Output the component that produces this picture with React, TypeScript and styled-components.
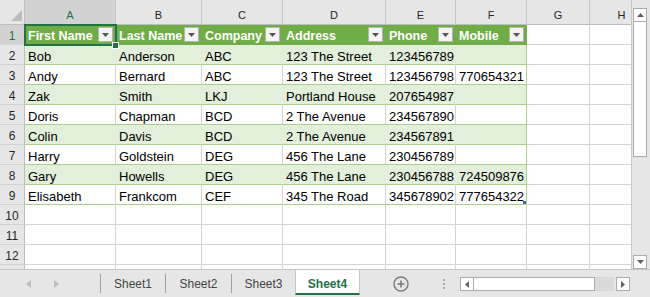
import React from 'react';
import styled, { createGlobalStyle, css } from 'styled-components';

const GlobalStyle = createGlobalStyle`
  html, body { margin: 0; padding: 0; background: #ffffff; }
  body { font-family: "Liberation Sans", Arial, sans-serif; }
  * { box-sizing: border-box; }
`;

const COLS = [91, 86, 81, 103, 70, 71, 63, 64];
const LETTERS = ['A', 'B', 'C', 'D', 'E', 'F', 'G', 'H'];
const TABLE_COLS = 6;

const HEAD = ['First Name', 'Last Name', 'Company', 'Address', 'Phone', 'Mobile'];
const DATA: string[][] = [
  ['Bob', 'Anderson', 'ABC', '123 The Street', '123456789', ''],
  ['Andy', 'Bernard', 'ABC', '123 The Street', '123456798', '770654321'],
  ['Zak', 'Smith', 'LKJ', 'Portland House', '207654987', ''],
  ['Doris', 'Chapman', 'BCD', '2 The Avenue', '234567890', ''],
  ['Colin', 'Davis', 'BCD', '2 The Avenue', '234567891', ''],
  ['Harry', 'Goldstein', 'DEG', '456 The Lane', '230456789', ''],
  ['Gary', 'Howells', 'DEG', '456 The Lane', '230456788', '724509876'],
  ['Elisabeth', 'Frankcom', 'CEF', '345 The Road', '345678902', '777654322'],
];
const NUMBERED_ROWS = 12;
const TOTAL_ROWS = 13;

const Window = styled.div`
  width: 650px;
  height: 297px;
  display: flex;
  flex-direction: column;
  overflow: hidden;
  background: #e6e6e6;
`;

const Main = styled.div`
  display: flex;
  height: 270px;
`;

const SheetArea = styled.div`
  position: relative;
  width: 631px;
  height: 270px;
  overflow: hidden;
  background: #ffffff;
  border-bottom: 1px solid #c6c6c6;
`;

const Grid = styled.div`
  display: grid;
  grid-template-columns: 25px ${COLS.map((c) => `${c}px`).join(' ')};
  grid-template-rows: 25px;
  grid-auto-rows: 20px;
`;

const Corner = styled.div`
  background: #e6e6e6;
  border-right: 1px solid #bdbdbd;
  border-bottom: 1px solid #bdbdbd;
  display: flex;
  align-items: flex-end;
  justify-content: flex-end;
  padding: 0 2px 3px 0;
`;

const ColHeader = styled.div<{ $sel?: boolean }>`
  background: ${(p) => (p.$sel ? '#d2d2d2' : '#e6e6e6')};
  color: ${(p) => (p.$sel ? '#217346' : '#262626')};
  border-right: 1px solid #c8c8c8;
  border-bottom: 1px solid ${(p) => (p.$sel ? '#217346' : '#bdbdbd')};
  font-size: 11px;
  line-height: 13px;
  display: flex;
  align-items: flex-end;
  justify-content: center;
  padding-bottom: 2px;
`;

const RowHeader = styled.div<{ $sel?: boolean }>`
  background: ${(p) => (p.$sel ? '#d2d2d2' : '#e6e6e6')};
  color: ${(p) => (p.$sel ? '#217346' : '#262626')};
  border-right: 1px solid ${(p) => (p.$sel ? '#217346' : '#bdbdbd')};
  border-bottom: 1px solid #d0d0d0;
  font-size: 12px;
  line-height: 17px;
  padding-top: 3px;
  text-align: center;
`;

type Kind = 'head' | 'band' | 'white' | 'none';

const Cell = styled.div<{ $kind: Kind; $edge?: boolean }>`
  display: flex;
  align-items: flex-start;
  justify-content: space-between;
  padding: 3px 2px 0 3px;
  font-size: 13px;
  line-height: 17px;
  white-space: nowrap;
  overflow: hidden;
  color: #000000;
  background: #ffffff;
  border-right: 1px solid #d4d4d4;
  border-bottom: 1px solid #d4d4d4;
  ${(p) =>
    p.$kind === 'head' &&
    css`
      background: #70ad47;
      color: #ffffff;
      font-weight: bold;
      font-size: 12.5px;
      border-right-color: #70ad47;
      border-bottom-color: #70ad47;
    `}
  ${(p) =>
    p.$kind === 'band' &&
    css`
      background: #e2efda;
      border-right-color: ${p.$edge ? '#a9d08e' : '#e2efda'};
      border-bottom-color: #a9d08e;
    `}
  ${(p) =>
    p.$kind === 'white' &&
    css`
      border-right-color: ${p.$edge ? '#a9d08e' : '#d4d4d4'};
      border-bottom-color: #a9d08e;
    `}
`;

const FilterButton = styled.span`
  flex: none;
  width: 15px;
  height: 15px;
  margin-top: -1px;
  border: 1px solid #b4b4b4;
  background: #f4f4f4;
  display: flex;
  align-items: center;
  justify-content: center;
`;

const Selection = styled.div`
  position: absolute;
  left: 24px;
  top: 24px;
  width: 93px;
  height: 22px;
  border: 2px solid #217346;
  pointer-events: none;
`;

const FillHandle = styled.div`
  position: absolute;
  left: 112px;
  top: 42px;
  width: 7px;
  height: 7px;
  background: #217346;
  border: 1px solid #ffffff;
`;

const ResizeHandle = styled.div`
  position: absolute;
  left: 523px;
  top: 201px;
  width: 3px;
  height: 3px;
  background: #3e64b4;
`;

const VScroll = styled.div`
  width: 19px;
  height: 270px;
  display: flex;
  flex-direction: column;
  padding: 8px 3px 0 1px;
  background: #e6e6e6;
  border-left: 1px solid #c8c8c8;
  border-bottom: 1px solid #c6c6c6;
`;

const ScrollButton = styled.div`
  flex: none;
  width: 14px;
  height: 14px;
  background: #ffffff;
  border: 1px solid #ababab;
  display: flex;
  align-items: center;
  justify-content: center;
`;

const VThumb = styled.div`
  flex: none;
  height: 135px;
  background: #ffffff;
  border: 1px solid #ababab;
  border-top: none;
`;

const VTrack = styled.div`
  flex: 1;
`;

const TabBar = styled.div`
  height: 27px;
  display: flex;
  align-items: stretch;
  background: #e6e6e6;
  font-size: 12px;
  color: #444444;
`;

const Nav = styled.div`
  width: 100px;
  flex: none;
  display: flex;
  align-items: center;
  padding-left: 26px;
  gap: 23px;
`;

const Sep = styled.div`
  flex: none;
  width: 1px;
  height: 19px;
  align-self: center;
  background: #a0a0a0;
`;

const Tab = styled.div<{ $w: number }>`
  flex: none;
  width: ${(p) => p.$w}px;
  display: flex;
  align-items: center;
  justify-content: center;
`;

const ActiveTab = styled(Tab)`
  background: #ffffff;
  color: #217346;
  font-weight: bold;
  border-left: 1px solid #c6c6c6;
  border-right: 1px solid #c6c6c6;
  border-bottom: 2px solid #217346;
  margin-bottom: 2px;
  padding-top: 4px;
`;

const AddSheet = styled.div`
  flex: none;
  margin-left: 33px;
  align-self: center;
  display: flex;
`;

const Dots = styled.div`
  flex: none;
  margin-left: 34px;
  align-self: center;
  display: flex;
  flex-direction: column;
  gap: 2px;
`;

const Dot = styled.span`
  width: 2px;
  height: 2px;
  background: #a6a6a6;
`;

const HScroll = styled.div`
  flex: none;
  margin-left: 15px;
  align-self: center;
  margin-top: 1px;
  display: flex;
  height: 14px;
`;

const HThumb = styled.div`
  width: 121px;
  background: #ffffff;
  border: 1px solid #ababab;
  border-left: none;
`;

const HTrack = styled.div`
  width: 19px;
  background: #d9d9d9;
  margin-right: 2px;
`;

const Tri = ({ dir, color, w, h }: { dir: 'up' | 'down' | 'left' | 'right'; color: string; w: number; h: number }) => {
  const pts =
    dir === 'up'
      ? `0,${h} ${w},${h} ${w / 2},0`
      : dir === 'down'
      ? `0,0 ${w},0 ${w / 2},${h}`
      : dir === 'left'
      ? `${w},0 ${w},${h} 0,${h / 2}`
      : `0,0 0,${h} ${w},${h / 2}`;
  return (
    <svg width={w} height={h} viewBox={`0 0 ${w} ${h}`} style={{ display: 'block' }}>
      <polygon points={pts} fill={color} />
    </svg>
  );
};

export default function App() {
  const rows: React.ReactNode[] = [];
  for (let r = 1; r <= TOTAL_ROWS; r++) {
    rows.push(
      <RowHeader key={`rh${r}`} $sel={r === 1}>
        {r <= NUMBERED_ROWS ? r : ''}
      </RowHeader>
    );
    LETTERS.forEach((_, c) => {
      const inTable = c < TABLE_COLS && r <= 9;
      let kind: Kind = 'none';
      if (inTable) kind = r === 1 ? 'head' : r % 2 === 0 ? 'band' : 'white';
      const edge = c === TABLE_COLS - 1;
      let content: React.ReactNode = null;
      if (inTable) {
        if (r === 1) {
          content = (
            <>
              <span>{HEAD[c]}</span>
              <FilterButton>
                <Tri dir="down" color="#555555" w={7} h={4} />
              </FilterButton>
            </>
          );
        } else {
          content = <span>{DATA[r - 2][c]}</span>;
        }
      }
      rows.push(
        <Cell key={`c${r}-${c}`} $kind={kind} $edge={edge}>
          {content}
        </Cell>
      );
    });
  }

  return (
    <>
      <GlobalStyle />
      <Window>
        <Main>
          <SheetArea>
            <Grid>
              <Corner>
                <svg width="11" height="11" viewBox="0 0 11 11" style={{ display: 'block' }}>
                  <polygon points="11,0 11,11 0,11" fill="#bcbcbc" />
                </svg>
              </Corner>
              {LETTERS.map((l, i) => (
                <ColHeader key={l} $sel={i === 0}>
                  {l}
                </ColHeader>
              ))}
              {rows}
            </Grid>
            <Selection />
            <FillHandle />
            <ResizeHandle />
          </SheetArea>
          <VScroll>
            <ScrollButton>
              <Tri dir="up" color="#606060" w={7} h={4} />
            </ScrollButton>
            <VThumb />
            <VTrack />
            <ScrollButton>
              <Tri dir="down" color="#606060" w={7} h={4} />
            </ScrollButton>
          </VScroll>
        </Main>
        <TabBar>
          <Nav>
            <Tri dir="left" color="#bfbfbf" w={5} h={8} />
            <Tri dir="right" color="#bfbfbf" w={5} h={8} />
          </Nav>
          <Sep />
          <Tab $w={64}>Sheet1</Tab>
          <Sep />
          <Tab $w={65}>Sheet2</Tab>
          <Sep />
          <Tab $w={63}>Sheet3</Tab>
          <ActiveTab $w={65}>Sheet4</ActiveTab>
          <AddSheet>
            <svg width="16" height="16" viewBox="0 0 16 16" style={{ display: 'block' }}>
              <circle cx="8" cy="8" r="7" fill="none" stroke="#7a7a7a" strokeWidth="1.4" />
              <path d="M8 4.5v7M4.5 8h7" stroke="#7a7a7a" strokeWidth="1.6" />
            </svg>
          </AddSheet>
          <Dots>
            <Dot />
            <Dot />
            <Dot />
          </Dots>
          <HScroll>
            <ScrollButton>
              <Tri dir="left" color="#606060" w={4} h={7} />
            </ScrollButton>
            <HThumb />
            <HTrack />
            <ScrollButton>
              <Tri dir="right" color="#606060" w={4} h={7} />
            </ScrollButton>
          </HScroll>
        </TabBar>
      </Window>
    </>
  );
}
